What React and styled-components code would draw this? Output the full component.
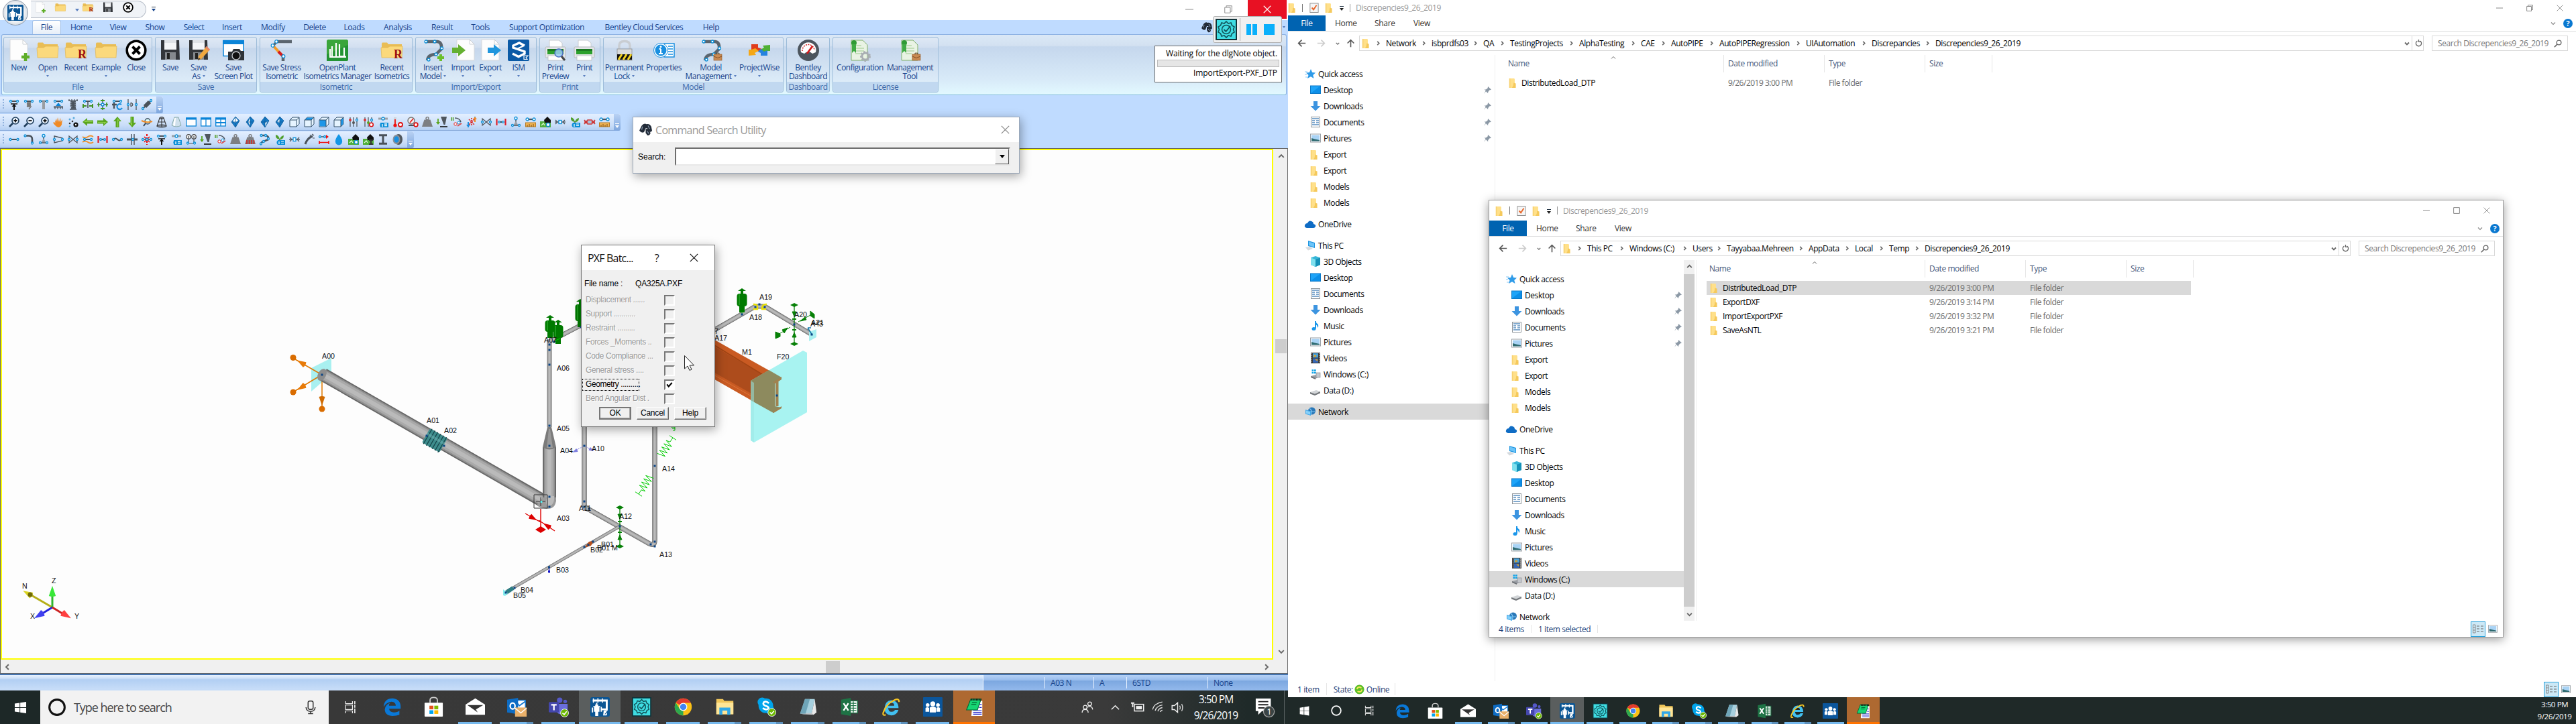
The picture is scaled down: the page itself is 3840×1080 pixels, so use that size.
import React from "react";
import styled, { createGlobalStyle, css } from "styled-components";

const UI = `"Open Sans", "Noto Sans", sans-serif`;
const SANS = `"Liberation Sans", Arial, sans-serif`;

const Global = createGlobalStyle`
  *{box-sizing:border-box}
  html,body{margin:0;padding:0;background:#fff;overflow:hidden}
  body{font-family:${UI};font-size:12px;letter-spacing:-.42px;color:#000;white-space:nowrap}
  svg{display:block;flex:none;overflow:visible}
`;

/* ---------- shared drawing helpers ---------- */
const Svg = ({ s = 16, box = 16, w, h, children }) => (
  <svg width={w || s} height={h || s} viewBox={`0 0 ${box} ${box}`} preserveAspectRatio="none">{children}</svg>
);
const L = ({ d, c = "#4a525a", w = 1.5, f = "none", ...r }) => <path d={d} stroke={c} strokeWidth={w} fill={f} {...r} />;
const F = ({ d, c }) => <path d={d} fill={c} />;
const N = ({ x, y, r = 1.5 }) => <circle cx={x} cy={y} r={r} fill="#fff" stroke="#0a8fd8" strokeWidth="1.3" />;

/* ---------- 16px toolbar glyphs ---------- */
const Bar = () => <><L d="M2 3H14" w={2} /><N x={3} y={3} /><N x={13} y={3} /></>;
const Lens = ({ k }) => (
  <>
    <L d="M1 15L6 10" c="#1d3c5a" w={2.6} />
    <circle cx="10" cy="6" r="5" fill="#eaf4ff" stroke="#1d3c5a" strokeWidth="1.6" />
    <L d={k === "-" ? "M7.5 6H12.5" : "M7.5 6H12.5M10 3.5V8.5"} c="#111" w={1.8} />
  </>
);
const Info = () => (
  <><L d="M1 3H15" c="#9aa0a6" w={3} /><N x={8} y={3} r={2} /><rect x="4" y="9" width="12" height="7" fill="#0a8fd8" /><circle cx="7" cy="12.5" r="3.6" fill="#0a8fd8" /><L d="M7 11V15M10 11H14M10 13.5H14" c="#fff" w={1.3} /></>
);
const Valve = () => <><L d="M2 3V13L14 3V13Z" w={1.2} /><N x={2} y={8} /><N x={14} y={8} /></>;
const Arrow = ({ r }) => <g transform={`rotate(${r} 8 8)`}><F d="M0 8L7 2V5.5H16V10.5H7V14Z" c="#5aa51e" /><F d="M2 8L6 5V7H15V8Z" c="#8fd04a" /></g>;
const Cube = ({ k }) => (
  <>
    <path d="M1 5L5 1H15V11L11 15H1Z" fill="#e6f4ff" stroke="#33506b" strokeWidth="1" />
    {k === 1 && <F d="M1.5 5L5 1.5H14.5L11 5Z" c="#1c96e8" />}
    {k === 2 && <F d="M1.5 5H11V14.5H1.5Z" c="#1c96e8" />}
    {k === 3 && <F d="M11 5L14.5 1.5V11L11 14.5Z" c="#1c96e8" />}
    <L d="M1 5H11V15M11 5L15 1" c="#33506b" w={1} />
  </>
);
const Gem = ({ k }) => (
  <>
    <F d="M8 0L14 6L8 16L2 8Z" c="#1679c4" />
    <F d={["M8 1L12 6L8 9L4 7Z", "M8 1L5 8L8 14Z", "M8 9L12 7L8 15Z", "M4 8L8 3L8 9Z"][k]} c="#fff" />
    <L d="M8 0L14 6L8 16L2 8ZM8 0V16M2 8H13" c="#0b5a9c" w={0.8} />
  </>
);
const Win = ({ k }) => (
  <><rect x="0.7" y="2" width="14.6" height="12" fill="#fff" stroke="#0a84d8" strokeWidth="1.3" /><rect x="0" y="1.5" width="16" height="3" fill="#0a84d8" />{k > 0 && <L d="M8 3V14" c="#0a84d8" w={1.3} />}{k > 1 && <L d="M0 9H16" c="#0a84d8" w={2} />}</>
);
const Sliders = ({ p }) => <><L d="M3 1V15M8 1V15M13 1V15" w={1.2} /><circle cx="3" cy="5" r="2" fill="#d33" /><circle cx="8" cy="9" r="2" fill={p ? "#5aa51e" : "#555"} /><N x={13} y={5} />{p && <circle cx="12.5" cy="12" r="2.8" fill="#fff" stroke="#d11" strokeWidth="1.6" />}</>;
const Weight = ({ r }) => <><circle cx="8" cy="2.6" r="2" fill="none" stroke="#777" strokeWidth="1.4" /><F d="M3.5 4.5H12.5L16 15H0Z" c="#7d7f82" />{r && <L d="M3 9V15M6.5 9V15M10 9V15M13.5 9V15" c="#d22" w={1.5} />}</>;
const Dial = () => <><L d="M0 6V1M2.5 1V6" c="#4a9a1c" w={1.4} /><L d="M5 2Q12 2 14 8" w={1.6} /><circle cx="6" cy="11" r="2.2" fill="#fff" stroke="#d22" /><circle cx="11" cy="9" r="2" fill="#fff" stroke="#0a8fd8" /><L d="M9 14L15 10" c="#d55" w={2} /></>;
const Funnel = () => <><F d="M6 0H15L12.5 12H10.5Z" c="#50575e" /><L d="M5 15H16" c="#111" w={1.6} /><L d="M2 3V11" c="#5aa51e" w={1.8} /><F d="M-1 8H5L2 12Z" c="#5aa51e" /></>;
const Tee = () => <><L d="M8 2V11M2 13H14" w={1.6} /><N x={8} y={2.5} r={2} /><N x={3} y={13} /><N x={13} y={13} /><F d="M8 6L11 12H5Z" c="#9aa0a6" /></>;
const Ruler = () => <><L d="M2 4H14" w={2.2} /><N x={3} y={4} r={2} /><N x={13} y={4} r={2} /><rect x="0.5" y="9" width="15" height="6" fill="#f0b455" stroke="#b77a20" /><L d="M3 12V15M6 11V15M9 12V15M12 11V15" c="#7a4c10" w={1} /></>;
const House = ({ k }) => <><rect x="0" y="7" width="16" height="9" fill="#4fae3b" /><F d="M6 5L11 0L16 5V9H7Z" c="#111" /><L d="M2 13L5 10L7 13" c="#e8ffe0" w={1.2} />{k ? <L d="M9 9H15M12 9V15M9 15H15" c="#333" w={2} /> : <N x={12} y={12} r={2.6} />}</>;
const RedPipe = () => <><L d="M4 8H12" w={2.2} /><N x={5} y={8} r={1.4} /><N x={11} y={8} r={1.4} /><L d="M1.5 3V13M14.5 3V13" c="#e0202a" w={2.2} /></>;
const Plant = () => <><F d="M8 8Q1 7 2 1Q7 2 8 8Q9 3 14 2Q14 8 8 8" c="#4f9f2c" /><L d="M8 7V10" c="#4a7a20" /><rect x="5" y="9" width="11" height="7" fill="#0a8fd8" /><circle cx="7" cy="12.5" r="3.5" fill="#0a8fd8" /><L d="M7 11V15M10 11H14M10 13.5H14" c="#fff" w={1.2} /></>;
const Conn = () => <><L d="M0 8H16" w={1.3} /><L d="M1 5L4 8L1 11M15 5L12 8L15 11" w={1.2} /><rect x="6" y="5.5" width="4" height="5" fill="#fff" stroke="#0a8fd8" strokeWidth="1.3" /></>;
const Frustum = ({ wire }) => wire
  ? <><L d="M5 2H11L15 14H1ZM8 2V15M3 8H13" c="#333" w={1.1} /><ellipse cx="8" cy="2" rx="3" ry="1.5" fill="none" stroke="#333" /><ellipse cx="8" cy="14" rx="7" ry="2" fill="none" stroke="#333" /></>
  : <><path d="M5 1H11L15 13Q8 17 1 13Z" fill="#cfe0ec" stroke="#8aa" /><F d="M5 2H7L6 14L3 13Z" c="#fff" /></>;

const G = {
  hold: <><Bar /><L d="M3 7H13" c="#111" w={1.5} /><L d="M8 8V16" c="#111" w={2} /><F d="M4.5 11L8 7L11.5 11Z" c="#111" /></>,
  spring: <><Bar /><L d="M5 5H11L5 7H11L5 9H11L5 11H11L8 15" c="#777" w={1.5} /></>,
  rod: <><Bar /><L d="M8 3V15" c="#9a9ea2" w={4} /></>,
  ground: <><Bar /><F d="M8 5L12 10H4Z" c="#0a84d8" /><L d="M1 11.5H15" w={2} /><L d="M3 12V15M7 12V15M11 12V15M14 12V15" w={1.2} /></>,
  coil: <><L d="M1 1.5H15M2 0V3M6 0V3M10 0V3M14 0V3" w={1.2} /><L d="M4 4H12L4 7H12L4 10H12L5 13H12" w={1.8} /><L d="M3 15H13" w={1.6} /></>,
  guide: <><Bar /><L d="M8 4V13" w={1.6} /><L d="M0 10H6M10 10H16M1 7V13M15 7V13" c="#3f8f1e" w={1.8} /></>,
  cross: <><L d="M0 8H16M8 0V16" w={1.4} /><N x={8} y={8} r={2} /><L d="M2 5V11M14 5V11M5 2H11M5 14H11" c="#3f9f1e" w={1.8} /></>,
  rotate: <><Bar /><L d="M3 5V14M0 8H7" w={2.4} /><path d="M14 8A4 4 0 1 0 15 13" fill="none" stroke="#1a8fe0" strokeWidth="2.2" /></>,
  dBox: <><L d="M2 0V16M14 0V16" w={1.3} /><N x={2} y={8} /><N x={14} y={8} /><L d="M6 5V11M6 5Q12 8 6 11" c="#444" w={1.1} /></>,
  damper: <><L d="M2 14L14 2" w={2} /><L d="M5 11L12 4" w={6} /><N x={2} y={14} /><N x={14} y={2} /></>,
  zin: <Lens k="+" />, zout: <Lens k="-" />,
  hand: <><F d="M3 8L5 3L6 8L7 1L9 8L11 1.5L11.5 8L14 4L13 12Q11 16 8 16Q4 15 0 9Q2 7 4 10Z" c="#f08a24" /></>,
  dots: <><circle cx="3" cy="4" r="1.5" fill="#59a9dd" /><circle cx="9" cy="2" r="1.5" fill="#59a9dd" /><circle cx="3" cy="10" r="1.3" fill="#333" /><circle cx="7" cy="7" r="1.3" fill="#333" /><circle cx="3" cy="14.5" r="1.2" fill="#59a9dd" /><circle cx="12" cy="12" r="3.6" fill="#111" /><circle cx="12" cy="12" r="1.2" fill="#fff" /></>,
  al: <Arrow r={0} />, ar: <Arrow r={180} />, au: <Arrow r={90} />, ad: <Arrow r={270} />,
  orbit: <><L d="M3 14L6 10" c="#345" w={2} /><circle cx="9" cy="7" r="4" fill="#dff" stroke="#345" strokeWidth="1.3" /><L d="M0 6Q8 10 16 7" c="#f08a24" w={2} /></>,
  wire: <Frustum wire />, solid: <Frustum />,
  w0: <Win k={0} />, w1: <Win k={1} />, w2: <Win k={2} />,
  g0: <Gem k={0} />, g1: <Gem k={1} />, g2: <Gem k={2} />, g3: <Gem k={3} />,
  c0: <Cube k={0} />, c1: <Cube k={1} />, c2: <Cube k={2} />, c3: <Cube k={3} />,
  sl: <Sliders />, slp: <Sliders p />, info: <Info />,
  temp: <><L d="M4 1V11" c="#cfd6dc" w={4} /><L d="M4 4V12" c="#e11" w={1.8} /><circle cx="4" cy="13" r="2.6" fill="#e11" /><circle cx="12" cy="12" r="3" fill="#fff" stroke="#d11" strokeWidth="1.8" /></>,
  gauge: <><circle cx="6" cy="6" r="5" fill="#eee" stroke="#777" strokeWidth="1.4" /><L d="M4 9L9 3" c="#e11" /><L d="M2 13H10" w={2} /><circle cx="13" cy="12" r="2.8" fill="#fff" stroke="#d11" strokeWidth="1.8" /></>,
  weight: <Weight />, weightR: <Weight r />, funnel: <Funnel />, dial: <Dial />,
  thermal: <><L d="M3 16V8M13 0V8" c="#1a8fe0" w={2} /><F d="M0 12H6L3 16Z" c="#1a8fe0" /><L d="M13 3V8" c="#f08a24" w={2} /><F d="M10 4H16L13 0Z" c="#f08a24" /><L d="M4 4L12 12M12 4L4 12M8 2V14" c="#d22" w={1.6} strokeDasharray="2 1" /></>,
  valve: <Valve />, red: <RedPipe />, tee: <Tee />, ruler: <Ruler />, house: <House />, house2: <House k={1} />, conn: <Conn />, plant: <Plant />,
  clash: <><L d="M0 5L5 11H11L16 5M0 11L5 5H11L16 11M0 8H16" c="#c33" w={1.6} /><rect x="5.5" y="6" width="5" height="4" fill="#a9c6e0" /></>,
  run: <><L d="M3 8H13" w={2} /><N x={2.5} y={8} /><N x={13.5} y={8} /></>,
  bend: <><L d="M2 2.5H8Q13 2.5 13 8V13" w={2.6} /><N x={2.5} y={2.5} /><N x={13} y={13.5} /></>,
  reducer: <><L d="M2 3L14 6V10L2 13Z" w={1.3} /><N x={2} y={8} /><N x={14} y={8} /></>,
  hot: <><L d="M0 4Q4 7 8 4T16 4M0 12Q4 9 8 12T16 12" c="#f0902a" w={1.8} /><L d="M2 8H14" w={2} /><N x={3} y={8} /><N x={13} y={8} /></>,
  flex: <><L d="M2 8Q5 5 8 8T14 8" w={1.8} /><N x={2} y={8} /><N x={14} y={8} /></>,
  crossing: <><L d="M7 0V16M11 0V16" w={1.4} /><L d="M0 8H16" w={3} /><N x={9} y={8} /></>,
  star: <><L d="M8 0V16" c="#e11" w={2} strokeDasharray="3 2" /><L d="M0 8H16" w={1.6} /><N x={2} y={8} /><N x={14} y={8} /><L d="M4 4L12 12M12 4L4 12" c="#e11" w={1.6} /><N x={8} y={8} /></>,
  gauges: <><circle cx="4" cy="4" r="3.3" fill="#eee" stroke="#444" strokeWidth="1.2" /><circle cx="12" cy="4" r="3.3" fill="#eee" stroke="#444" strokeWidth="1.2" /><L d="M4 3V12M12 3V12M3 14H13" w={1.2} /><N x={3} y={13.5} /><N x={13} y={13.5} /></>,
  loop: <><L d="M2 2H9Q14 3 13 8L6 11Q2 12 2 15" w={2.6} /><N x={2.5} y={2} /><N x={9} y={2} /><N x={13} y={7} /><N x={6} y={11} /><N x={2} y={14.5} /></>,
  torch: <><L d="M2 15Q5 6 13 3" w={3} /><L d="M12 0L15 2M13 6L16 6M9 1L10 3" w={1.2} /></>,
  measure: <><L d="M3 4H10" w={1.5} /><N x={2} y={4} /><N x={9} y={4} /><F d="M11 1L15 4L11 7Z" c="#e11" /><L d="M1 12.5H15M1 10V15M15 10V15" c="#e11" w={1.6} /></>,
  drop: <><F d="M8 0Q14 8 13 11.5A5 5 0 0 1 3 11.5Q2 8 8 0" c="#1296e6" /></>,
  beam: <><L d="M2 1.8H14M2 14.2H14" w={3} /><L d="M8 2V14" w={3} /></>,
  flange: <><ellipse cx="9" cy="8" rx="6" ry="8" fill="#50575e" /><ellipse cx="6" cy="8" rx="5.5" ry="7" fill="#8a9096" /><ellipse cx="6" cy="8" rx="3.6" ry="4.8" fill="#1a8fe0" /></>,
};

/* ---------- 32px icons ---------- */
const Folder = ({ r }) => (
  <><F d="M1 6L2 4.5H9L11 7H31V27H1Z" c="#e9bd55" /><path d="M0 12H10L13 10H32L31 27H1Z" fill="#fbd97c" stroke="#e3b650" strokeWidth="0.7" />{r && <text x="19" y="28" fontFamily="Liberation Serif" fontSize="18" fontWeight="700" fill="#9a1212" letterSpacing="0">R</text>}</>
);
const Page = ({ c = "#fdfdfd" }) => <><path d="M3 0H22L29 7V31H3Z" fill={c} stroke="#d5d8dc" /><path d="M22 0V7H29Z" fill="#fff" stroke="#c2c6cc" strokeWidth="0.8" /></>;
const Floppy = () => <><F d="M2 1H29L30 30H2Z" c="#33363b" /><F d="M7 1H25V15H7Z" c="#f4f5f7" /><F d="M7 1H25V5H7Z" c="#dfe2e6" /><F d="M8 19H24V30H8Z" c="#85898e" /><F d="M11 20H15V29H11Z" c="#222" /></>;
const PipeS = () => <><L d="M4 3H22Q29 4 28 14L20 22Q8 22 7 31" c="#5b656e" w={4.5} /><N x={5} y={3} r={2} /><N x={18} y={3} r={2} /><N x={28.5} y={13} r={2} /><N x={20} y={22} r={2} /><N x={9} y={30} r={2} /></>;
const Printer = () => <><path d="M7 1H21L26 5V12H7Z" fill="#fff" stroke="#c9ccd0" /><rect x="1" y="11" width="30" height="16" rx="1.5" fill="#e4e6e8" stroke="#b5b8bc" /><rect x="4" y="14" width="24" height="8" fill="#2ca02c" /><rect x="4" y="14" width="24" height="3" fill="#1d7a22" /><rect x="5" y="24" width="22" height="7" fill="#fff" stroke="#b9bcc0" strokeWidth="0.8" /></>;
const Case = ({ x = 19, y = 22 }) => <g transform={`translate(${x} ${y})`}><rect x="0" y="1" width="12" height="9" fill="#c98a52" stroke="#99602e" strokeWidth="0.7" /><L d="M4 1V-0.8H8V1" c="#5a3a1a" w={1} /><L d="M0 4L6 6.5L12 4" c="#7a4a20" w={0.9} /></g>;
const Cert = () => <><path d="M3 1H20L27 8V31H3Z" fill="#e9f3e4" stroke="#7fae6a" /><L d="M9 9H18M9 13H22M9 17H22M9 21H18" c="#9cc98a" w={1.2} /><circle cx="7" cy="5" r="4" fill="#2f9a34" /><F d="M4 7H10V20L7 17L4 20Z" c="#3faa44" /></>;
const PlantLogo = () => (
  <>
    <rect width="32" height="32" rx="3" fill="#0a5594" />
    <L d="M4 5.500H22M22 5.500H27V20H18" c="#fff" w={3.200} /><L d="M5 2V9M12.500 1.500V9M20 2V9" c="#fff" w={1.600} />
    <L d="M10.500 9V15M5 15.500H16" c="#fff" w={2} />
    <F d="M8 12H13V16H15V24H13V31H8V24H6V16H8Z" c="#fff" /><L d="M3.500 17V25M18 16V24" c="#fff" w={2} />
    <F d="M22 22L29 21L25.500 25Q29 27 26.500 30H21Z" c="#fff" /><F d="M24.500 26L26 27.500L23.500 28.500Z" c="#0a5594" />
  </>
);
const CheckGear = () => <><rect x="1" y="1" width="30" height="30" fill="#3fdde3" stroke="#12343a" strokeWidth="2" /><L d="M16 4L19 7L23 6L24.5 10L28 12L26.5 16L28 20L24.500 22L23 26L19 25L16 28L13 25L9 26L7.500 22L4 20L5.500 16L4 12L7.500 10L9 6L13 7Z" c="#12545a" w={1.6} /><circle cx="16" cy="16" r="6.5" fill="none" stroke="#12545a" strokeWidth="1.6" /><L d="M12.500 16L15.500 19L22 11" c="#12545a" w={1.8} /></>;
const CloseRing = () => <><circle cx="16" cy="16" r="13.800" fill="#fff" stroke="#000" strokeWidth="3.600" /><L d="M10.500 10.500L21.500 21.500M21.500 10.500L10.500 21.500" c="#000" w={4} /></>;

const B = {
  new: <><Page /><L d="M26 20V32M20 26H32" c="#5fae28" w={4.5} /></>,
  folder: <Folder />, recent: <Folder r />, close: <CloseRing />, save: <Floppy />,
  saveas: <><Floppy /><F d="M28 10L33 15L20 29L15 31L16 25Z" c="#f0a840" /><F d="M28 10L33 15L31 17L26 12Z" c="#e8836a" /><F d="M15 31L16 27L19 29Z" c="#333" /></>,
  plot: <><rect x="1" y="1.500" width="30" height="23" fill="#fff" stroke="#0a84d8" strokeWidth="1.500" /><rect x="0" y="1" width="32" height="6" fill="#0a84d8" /><F d="M8 18H14L16 14H25L27 17H32V31H8Z" c="#2e3338" /><circle cx="20" cy="24" r="6" fill="#111" stroke="#c8ccd0" strokeWidth="1.300" /></>,
  stress: <><L d="M9 3H31" c="#5b656e" w={4.500} /><L d="M8 4L3 9" c="#5b656e" w={3.500} /><L d="M3 9L14 21" c="#f59a23" w={4} /><L d="M11 18L18 25" c="#d41c1c" w={4} /><L d="M18 25V32" c="#5b656e" w={4.500} /><N x={8} y={3} r={2.300} /><N x={2.500} y={9} r={2.300} /><N x={18.500} y={25} r={2.300} /></>,
  openplant: <><rect width="32" height="32" rx="2.500" fill="#3aa53a" /><F d="M0 32V22L32 8V29Q32 32 29 32Z" c="#249334" /><L d="M5 14V25M8 10V25M14 5V26M19 7V24M26 12V24M4 26H29M18 25H28" c="#fff" w={2.200} /></>,
  insert: <><PipeS /><L d="M27 22V32M22 27H32" c="#6bbf2a" w={4} /></>,
  import: <><g transform="translate(4 0)"><Page /></g><F d="M0 12H9V7L20 16L9 25V20H0Z" c="#64b030" /></>,
  export: <><Page /><F d="M12 12H21V7L32 16L21 25V20H12Z" c="#2196dd" /></>,
  ism: <><rect width="32" height="32" rx="2" fill="#0b5aa6" /><L d="M25 9L17 5L8 9V12L25 18V21L16 25.500L7 21" c="#fff" w={3.400} /><L d="M24 9L14 14" c="#fff" w={2} /><L d="M24 24H30L27 27L29 29.500H24Z" c="#fff" w={1.200} /></>,
  preview: <><Printer /><circle cx="21" cy="20" r="6" fill="#9ccdf5" fillOpacity=".85" stroke="#4b6fc4" strokeWidth="1.500" /><L d="M25 25L30 31" c="#444" w={3} /></>,
  print: <Printer />,
  lock: <><path d="M8 16V9Q8 2.500 16 2.500T24 9V16" fill="none" stroke="#c9cdd2" strokeWidth="3.500" /><rect x="5" y="14" width="22" height="17" fill="#d9dbdd" stroke="#8b8e92" strokeWidth="0.800" /><rect x="5" y="22" width="22" height="8" fill="#111" /><L d="M7 30L12 22M14 30L19 22M21 30L26 22" c="#f2d21e" w={3} /></>,
  props: <><rect x="16" y="6" width="15" height="20" fill="#fff" stroke="#1a8fe0" strokeWidth="1.500" /><L d="M22 10H29M22 14H29M22 18H29M22 22H29" c="#1a8fe0" w={1.300} /><circle cx="11" cy="16" r="10.500" fill="#fff" stroke="#1a8fe0" strokeWidth="1" /><circle cx="11" cy="16" r="8.500" fill="#1a8fe0" /><L d="M11 14V21M8 21H14M8.500 14H11" c="#fff" w={2} /><circle cx="11" cy="10.800" r="1.500" fill="#fff" /></>,
  mgmt: <><PipeS /><Case x={20} y={21} /></>,
  pw: <><F d="M4 7H14V12L20 14L15 18L9 14L4 16Z" c="#e03c1c" /><F d="M32 8V17H28L22 20L16 16L23 12L21 9Z" c="#4eb034" /><F d="M0 24V15H4L10 13L15 17L9 20L11 23Z" c="#f5a716" /><F d="M28 24H18V20L14 18L18 14L23 18L28 16Z" c="#2583e0" /></>,
  dash: <><circle cx="16" cy="16" r="16" fill="#4c555e" /><path d="M5 19A11.500 11.500 0 1 1 27 19L22 21A8 8 0 0 0 10 21Z" fill="#fff" /><path d="M7 17A9 9 0 0 1 25 16" fill="none" stroke="#c22" strokeWidth="1.500" strokeDasharray="2 1.500" /><L d="M14 21L22 10" c="#d11a1a" w={2.800} /></>,
  config: <><Cert /><circle cx="24" cy="25" r="5" fill="none" stroke="#a8adb2" strokeWidth="3" /><circle cx="24" cy="25" r="7" fill="none" stroke="#a8adb2" strokeWidth="2" strokeDasharray="2.500 2.500" /></>,
  license: <><Cert /><Case x={19} y={21} /></>,
};

/* ---------- taskbar icons ---------- */
const K = {
  start: <F d="M3 7L14 5.300V15.300H3ZM15.500 5L29 3V15.300H15.500ZM3 16.700H14V26.700L3 25ZM15.500 16.700H29V29L15.500 27Z" c="#fff" />,
  ring: <circle cx="16" cy="16" r="11" fill="none" stroke="#fff" strokeWidth="2.800" />,
  view: <><L d="M6 3V8H21V3M6 29V24H21V29M6 11H21V21H6Z" c="#e8e8e8" w={1.800} /><L d="M26 3V9M26 11V17M26 19V29" c="#e8e8e8" w={2.400} /></>,
  edge: <path d="M2 16Q3 2 17 2Q30 3 30 16V19H11Q12 25 19 25Q25 25 28 22V29Q23 31 17 31Q4 30 4 20Q5 12 13 9Q10 12 11 14H22Q22 8 15 7.500Q7 8 2 16Z" fill="#0a78d7" />,
  store: <><rect x="1" y="9" width="30" height="23" rx="1" fill="#fff" /><path d="M10 9V5Q10 0.500 16 0.500T22 5V9" fill="none" stroke="#ccc" strokeWidth="2" /><rect x="9" y="14" width="6.500" height="6" fill="#e2521d" /><rect x="17" y="14" width="6.500" height="6" fill="#7fba00" /><rect x="9" y="21.500" width="6.500" height="6" fill="#00a4ef" /><rect x="17" y="21.500" width="6.500" height="6" fill="#ffb900" /></>,
  mail: <><F d="M0 12L16 2L32 12V29H0Z" c="#fff" /><F d="M3 13H29L17 20L20 25Z" c="#333" /></>,
  outlook: <><rect x="13" y="5" width="17" height="17" fill="#fff" stroke="#1277d1" strokeWidth="1.500" /><L d="M14 7L20 14L30 7" c="#1277d1" w={2} /><F d="M0 4L18 1V28L0 25Z" c="#0d6cc4" /><ellipse cx="9" cy="14.500" rx="4" ry="5" fill="none" stroke="#fff" strokeWidth="2.500" /><rect x="13" y="17" width="19" height="15" fill="#e9b06a" /><L d="M13 18L22.500 26L32 18" c="#fff" w={1.600} /></>,
  teams: <><circle cx="18" cy="5" r="4.500" fill="#5559c8" /><circle cx="27" cy="7" r="3" fill="#5559c8" /><F d="M12 11H31V22Q26 30 20 28Q12 27 12 20Z" c="#6a6edb" /><rect x="0" y="8" width="17" height="17" rx="1.500" fill="#4447ad" /><L d="M4 12.500H13M8.500 12.500V21.500" c="#fff" w={2.500} /><circle cx="26" cy="26" r="6.500" fill="#6bb700" stroke="#fff" strokeWidth="1" /><L d="M22.500 26L25.500 28.500L29.500 23.500" c="#fff" w={1.800} /></>,
  pipe: <PlantLogo />, tc: <CheckGear />,
  chrome: <><circle cx="16" cy="16" r="14" fill="#fbc116" /><path d="M16 16L4 9A14 14 0 0 1 28.500 9.500L16 9.500Z" fill="#e33b2e" /><path d="M16 30A14 14 0 0 1 3.800 9L10 19L16 22.500Z" fill="#2da94f" /><circle cx="16" cy="16" r="6.600" fill="#fff" /><circle cx="16" cy="16" r="5.200" fill="#4284f3" /></>,
  files: <><F d="M2 3H13L15 6H30V28H2Z" c="#f0c65a" /><F d="M2 9H30V28H2Z" c="#ffe596" /><F d="M7 17H25V29H20V22H12V29H7Z" c="#31a8e8" /></>,
  skype: <><circle cx="15" cy="14" r="12" fill="#00a5ec" /><circle cx="9" cy="8" r="7.500" fill="#00a5ec" /><circle cx="21" cy="20" r="7.500" fill="#00a5ec" /><L d="M20 10Q16 6 12 8Q9 12 14 14Q21 16 19 19Q15 22 10 18" c="#fff" w={3} /><circle cx="25" cy="25" r="6.500" fill="#6bb700" stroke="#fff" strokeWidth="1" /><L d="M21.500 25L24.500 27.500L28.500 22.500" c="#fff" w={1.800} /></>,
  note: <><F d="M11 3H27L22 27H3Z" c="#a7d0de" /><F d="M27 3L30 25L25 29L22 27Z" c="#e9e9e9" /><F d="M3 27L22 26L25 29L8 28Z" c="#bfc4c8" /><F d="M11 3H19L12 27H3Z" c="#6fa5b8" /></>,
  excel: <><rect x="15" y="6" width="14" height="20" fill="#fff" stroke="#1e7345" strokeWidth="1.500" /><L d="M18 10H27M18 14H27M18 18H27M18 22H27M22 7V25" c="#1e7345" w={1.500} /><F d="M2 4L18 1V31L2 28Z" c="#1e7345" /><L d="M6 10L14 22M14 10L6 22" c="#fff" w={2.600} /></>,
  ie: <><path d="M16 5Q28 6 28 18H11Q12 25 17 24Q21 24 22 21H28Q25 30 16 30Q5 29 5 18Q6 6 16 5ZM11 14H21Q21 9 16 9.500Q11.500 10 11 14Z" fill="#42c0f0" /><path d="M29 8Q29 1 21 5Q8 11 3 25Q1 31 7 29" fill="none" stroke="#f5c423" strokeWidth="2.500" /></>,
  team: <><rect width="32" height="32" rx="1" fill="#0b569c" /><circle cx="16" cy="11" r="4" fill="#fff" /><circle cx="7.500" cy="13" r="3" fill="#fff" /><circle cx="24.500" cy="13" r="3" fill="#fff" /><F d="M11 25V17Q16 14 21 17V25ZM4 24V18Q7 15 10 18V24ZM22 24V18Q25 15 28 18V24Z" c="#fff" /></>,
  green: <><F d="M13 6H29V31H11Z" c="#fff" /><L d="M14 22H28M14 25H28M14 28H28M24 12H28M24 17H28" c="#22c" w={1.200} /><path d="M10 3H27L21 21H3Z" fill="#16d573" stroke="#063" strokeWidth="1.200" /><L d="M11 4H28" c="#111" w={3} strokeDasharray="1.500 1" /><L d="M12 9H20M11 12H19" c="#063" w={1.300} /></>,
};

/* ---------- explorer icons ---------- */
const FolderMini = () => <Svg s={14} w={13} h={15}><F d="M1 1H10L11 2V16H1Z" c="#ffe08a" /><F d="M9 8L13 9V16H6Q9 13 9 8" c="#f5c95c" /><F d="M1 1H3V16H1Z" c="#f7d272" /></Svg>;
const T = {
  star: <><F d="M9 1L11.200 6L16 6.500L12.300 10L13.500 15L9 12.300L4 15L5.500 10L2 6.500L7 6Z" c="#2f9be8" /><L d="M0 5H4M0 9H3M1 13H4" c="#8ac8f5" w={1} /></>,
  desk: <><rect x="0.500" y="2" width="15" height="11.500" fill="#1ea4f8" stroke="#0c79c8" /><F d="M1 13L14 3H15V13Z" c="#0d8fe8" /></>,
  down: <F d="M5 1H11V8H15.500L8 15.500L0.500 8H5Z" c="#3c94e0" />,
  doc: <><rect x="1.500" y="0.500" width="13" height="15" fill="#fff" stroke="#8a9298" /><L d="M3 3H13M3 6H7M9 6H13M3 9H7M9 9H13M3 12H13" c="#5a8fc0" w={1.300} /></>,
  pic: <><rect x="0.500" y="2" width="15" height="12" fill="#fff" stroke="#9aa0a6" /><rect x="2" y="3.500" width="12" height="9" fill="#a9d3f5" /><F d="M2 12.500V8L7 9.500L14 11V12.500Z" c="#2e6a70" /></>,
  cloud: <F d="M3 14Q-1 13 0 10Q1 7 4 7Q6 2 10 4Q13 5 13 8Q17 9 16 12Q15 14 13 14Z" c="#0f6cc4" />,
  pc: <><F d="M5 1L15 4V12L5 9Z" c="#2196e0" /><F d="M6 2.500L14 5V10.500L6 8Z" c="#6cc4f8" /><F d="M1 11L7 10L12 13L5 15.500Z" c="#d5d9dd" /></>,
  cube: <><F d="M8 0L15 2.500V13L8 16L1 13V2.500Z" c="#35b6d8" /><F d="M1 2.500L8 5V16L1 13Z" c="#7fe0ee" /><F d="M8 5L15 2.500V13L8 16Z" c="#1591b8" /></>,
  music: <><L d="M8 1V12" c="#1a96ea" w={2} /><ellipse cx="5.500" cy="12.500" rx="3" ry="2.500" fill="#1a96ea" /><F d="M8 1Q9 4 12 6Q13 9 11 11Q11 7 8 6Z" c="#1a96ea" /></>,
  video: <><rect x="1" y="0" width="14" height="16" fill="#333" /><rect x="4" y="1" width="8" height="6.500" fill="#4aa0d8" /><rect x="4" y="8.500" width="8" height="6.500" fill="#3668b8" /><F d="M6 3L10 5L5 7ZM7 10H11V13Z" c="#e0a020" /><L d="M2.500 1V16M13.500 1V16" c="#ddd" w={1.200} strokeDasharray="1.500 1.500" /></>,
  c: <><L d="M2.500 2.500H9M2.500 6H9" c="#12a4e8" w={2.600} strokeDasharray="2.800 0.700" /><F d="M1 11L9 9L15 11L8 15Z" c="#9a9ea4" /><F d="M1 11V13L8 16V14Z" c="#6b6f74" /><rect x="9" y="6" width="6" height="7" fill="#c3c7cc" stroke="#8a8e94" strokeWidth=".7" /></>,
  d: <><F d="M0 11L9 8L15 10L7 13.500Z" c="#d2d5d8" /><F d="M0 11L7 13.500L15 10V12.500L7 16L0 13.500Z" c="#74787c" /></>,
  net: <><circle cx="10.500" cy="7" r="5.500" fill="#2a78b8" /><L d="M7 3Q12 7 9 12M6 8H15" c="#7fc3f0" w={1.200} /><F d="M1 5L9 7.500V14L1 11.500Z" c="#3fa8ea" /><F d="M2 6.500L8 8.300V12.500L2 10.700Z" c="#86d0fa" /></>,
};
const Pin = () => <Svg s={11}><F d="M9 0L16 7L12 8L9 12V15L4.500 10.500L0 16L4 9L1 6.500H4.500L8 4Z" c="#8b98a5" /></Svg>;

/* ---------- layout ---------- */
const Desktop = styled.div`display:flex;width:3840px;height:1080px;position:relative;overflow:hidden;`;
const Screen = styled.div`width:1920px;height:1080px;display:flex;flex-direction:column;position:relative;flex:none;`;

/* CAD application */
const AppTitle = styled.div`height:30px;background:#fff;display:flex;flex:none;padding-left:4px;z-index:2;`;
const Orb = styled.div`width:38px;height:38px;border-radius:50%;background:radial-gradient(#fff 40%,#b9c3cf);border:1px solid #8d99a8;display:flex;align-items:center;justify-content:center;flex:none;`;
const QuickBar = styled.div`height:26px;margin:1px 0 0 4px;width:172px;border:1px solid #b4bbc6;border-left:0;border-radius:0 13px 13px 0;background:#f0f3f7;display:flex;align-items:flex-start;padding:1px 18px 0 6px;justify-content:space-between;`;
const Caret = styled.i`width:0;height:0;border:${p => p.$s || 3}px solid transparent;border-top:${p => (p.$s || 3) + 1}px solid ${p => p.$c || "#5a7fc0"};border-bottom:0;display:inline-block;flex:none;`;
const CaretCell = styled.div`margin:${p => p.$m || 0};display:flex;flex-direction:column;align-items:center;gap:2px;${p => p.$line && css`&:before{content:"";width:6px;border-top:1px solid ${p.$lc || "#234"};}`}`;
const WinButtons = styled.div`margin-left:auto;display:flex;height:28px;`;
const WinBtn = styled.div`width:${p => p.$w || 58}px;height:${p => p.$h || 28}px;display:flex;align-items:center;justify-content:center;${p => p.$red && "background:#e81123;"}`;
const Tabs = styled.div`height:21px;background:#bfdbff;display:flex;align-items:stretch;flex:none;padding-left:48px;color:#15428b;position:relative;`;
const Tab = styled.div`width:${p => p.$w}px;height:21px;line-height:22px;text-align:center;${p => p.$on && css`background:linear-gradient(#fff,#e6eef8);border:1px solid #a5c3ea;border-bottom:0;border-radius:3px 3px 0 0;line-height:20px;`}`;
const RibbonBack = styled.div`background:#bfdbff;flex:none;padding:0 2px;`;
const Ribbon = styled.div`height:91px;border:1px solid #8db2e3;border-bottom-color:#7fb8d8;border-radius:3px;background:linear-gradient(#dbe8f6 0,#d3e1f1 18%,#c5d7ed 20%,#d8eaf8 75%,#e2f9ff);padding:3px 0 3px 2px;display:flex;gap:4px;`;
const Group = styled.div`width:${p => p.$w}px;border:1px solid #9dbcd9;border-radius:3px;display:flex;flex-direction:column;background:linear-gradient(#dfe9f5 0,#d2dff0 18%,#c6d7ec 20%,#dcebf8 80%);overflow:hidden;`;
const GroupBody = styled.div`flex:1;display:flex;padding-left:${p => p.$pl}px;`;
const GroupName = styled.div`height:15px;line-height:15px;background:#c1d8f0;text-align:center;color:#3e6aaa;`;
const Tool = styled.div`width:${p => p.$w}px;flex:none;display:flex;flex-direction:column;align-items:center;padding-top:3px;color:#15428b;line-height:13px;text-align:center;font-size:12px;letter-spacing:-.52px;`;
const ToolText = styled.div`margin-top:3px;display:flex;flex-direction:column;align-items:center;`;
const ToolLine = styled.div`height:13px;display:flex;align-items:center;gap:3px;white-space:nowrap;`;
const ToolArea = styled.div`height:80px;background:#bfdbff;flex:none;display:flex;flex-direction:column;padding-top:2px;gap:1px;align-items:flex-start;border-bottom:1px solid #666;`;
const Strip = styled.div`height:25px;display:flex;align-items:center;background:linear-gradient(#e3efff,#c9ddf8 70%,#b4cff2);border-bottom:1px solid #86a9d8;border-radius:0 3px 3px 0;padding-left:4px;`;
const Grip = styled.div`width:2px;height:16px;background:repeating-linear-gradient(#8fb0dc 0 2px,transparent 2px 4px);margin-right:4px;`;
const Cell = styled.div`width:22px;display:flex;justify-content:center;flex:none;`;
const StripEnd = styled.div`width:10px;height:25px;margin-left:${p => p.$m || 0}px;background:linear-gradient(#b9d2f4,#7ea6dd);border-radius:0 4px 4px 0;display:flex;align-items:flex-end;justify-content:center;padding-bottom:4px;`;
const Work = styled.div`height:763px;flex:none;display:grid;grid-template-columns:1899px 19px;grid-template-rows:762px;border-left:1px solid #666;border-right:1px solid #666;background:#f0f0f0;`;
const View = styled.div`border:2px solid #ff0;background:#fdfdfd;width:1897px;height:762px;overflow:hidden;`;
const VBar = styled.div`display:flex;flex-direction:column;align-items:center;padding-top:6px;`;
const VThumb = styled.div`width:17px;height:21px;background:#cdcdcd;margin:${p => p.$m};`;
const HBar = styled.div`height:20px;flex:none;background:#f0f0f0;border:1px solid #666;border-top:0;display:flex;align-items:center;padding:0 26px 0 5px;`;
const HThumb = styled.div`width:21px;height:18px;background:#cdcdcd;margin:0 auto 0 1215px;`;
const Status = styled.div`height:25px;flex:none;display:flex;border-top:2px solid #4574b0;background:linear-gradient(#e8f2ff,#cfe1f8 20%,#b2cff3 30%,#c6dcf8 90%);color:#15428b;`;
const StatusDark = styled.div`margin-left:1465px;flex:1;display:flex;border-left:1px solid #fff;padding-left:91px;background:linear-gradient(#b5d0f5,#9cbfee 30%,#7da8e0 40%,#93b9ec);`;
const StatusCell = styled.div`width:${p => p.$w}px;border-left:1px solid #e8f2ff;padding-left:8px;line-height:17px;height:17px;margin-top:3px;`;

/* overlays floating on the desktop */
const Float = styled.div`position:absolute;left:${p => p.$x}px;top:${p => p.$y}px;width:${p => p.$w}px;height:${p => p.$h}px;z-index:5;display:flex;`;
const Recorder = styled(Float)`background:#f0f0f0;border:1px solid #b0b0b0;border-radius:3px;align-items:center;padding-left:3px;`;
const Divider = styled.div`width:1px;height:${p => p.$h}px;background:${p => p.$c || "#aaa"};margin:${p => p.$m || "0"};flex:none;`;
const Block = styled.div`width:${p => p.$w}px;height:16px;background:#0bb0fb;margin-left:${p => p.$m}px;`;
const Tip = styled(Float)`background:#fff;border:1px solid #666;flex-direction:column;padding:4px 3px;`;
const TipLine = styled.div`text-align:right;height:16px;line-height:14px;padding-right:${p => p.$r}px;letter-spacing:${p => p.$ls || -0.3}px;`;
const Progress = styled.div`height:11px;border:1px solid #bcbcbc;background:#e6e6e6;margin-bottom:2px;flex:none;`;
const Dialog = styled(Float)`flex-direction:column;background:#f0f0f0;border:1px solid ${p => p.$b};box-shadow:2px 4px 14px rgba(0,0,0,.35);`;
const DlgTitle = styled.div`height:37px;background:#fff;display:flex;align-items:center;padding:0 ${p => p.$pr}px 0 9px;font-size:16px;letter-spacing:${p => p.$ls || -0.8}px;color:${p => p.$c};`;
const Push = styled.div`margin-left:auto;`;
const SearchRow = styled.div`display:flex;align-items:center;padding:8px 0 0 7px;font:12px ${SANS};letter-spacing:0;`;
const Combo = styled.div`margin:0 13px 0 auto;width:500px;height:27px;background:#fff;border:2px solid;border-color:#6d6d6d #e8e8e8 #e8e8e8 #6d6d6d;display:flex;justify-content:flex-end;`;
const ComboBtn = styled.div`width:21px;background:#f0f0f0;border:1px solid;border-color:#fff #555 #555 #fff;display:flex;align-items:center;justify-content:center;`;
const FileLine = styled.div`height:34px;padding:13px 0 0 4px;font:12px ${SANS};letter-spacing:-.2px;display:flex;`;
const FileKey = styled.span`width:76px;`;
const Opt = styled.div`height:21.100px;display:flex;align-items:center;font:12px ${SANS};letter-spacing:-.42px;color:${p => p.$on ? "#000" : "#9a9a9a"};text-shadow:${p => p.$on ? "none" : "1px 1px 0 #fff"};padding-left:2px;`;
const OptText = styled.div`width:${p => p.$on ? 83 : 121}px;padding-left:4px;height:16px;line-height:15px;margin-right:${p => p.$on ? 38 : 0}px;outline:${p => p.$on ? "1px dotted #000" : "0"};`;
const Check = styled.div`width:16px;height:16px;border:2px solid;border-color:#777 #fff #fff #777;background:${p => p.$on ? "#fff" : "#f0f0f0"};display:flex;align-items:center;justify-content:center;`;
const BtnRow = styled.div`display:flex;gap:8px;padding:1px 0 0 26px;`;
const Btn = styled.div`width:48px;height:19px;font:12px ${SANS};letter-spacing:-.2px;line-height:15px;text-align:center;border:${p => p.$def ? 2 : 1}px solid;border-color:${p => p.$def ? "#777" : "#fff #666 #666 #fff"};background:#f0f0f0;box-shadow:inset -1px -1px 0 #aaa;padding-top:${p => p.$def ? 0 : 1}px;`;

/* taskbar */
const Taskbar = styled.div`height:${p => p.$h}px;flex:none;display:flex;background:${p => p.$bg};color:#fff;`;
const TaskCell = styled.div`width:${p => p.$w}px;flex:none;display:flex;flex-direction:column;align-items:center;justify-content:space-between;padding-top:${p => p.$pt}px;background:${p => p.$bg || "none"};`;
const Under = styled.div`height:3px;width:${p => p.$w}px;background:${p => p.$c};border-right:${p => p.$split ? "10px solid #5d90bb" : "0"};`;
const SearchBox = styled.div`width:430px;background:#f2f2f2;display:flex;align-items:center;padding:0 17px 0 11px;color:#444;font-size:18px;letter-spacing:-1.050px;`;
const SearchText = styled.div`margin:0 auto 0 11px;`;
const Tray = styled.div`margin-left:auto;display:flex;align-items:center;`;
const TrayCell = styled.div`width:${p => p.$w}px;display:flex;justify-content:center;`;
const Clock = styled.div`width:${p => p.$w}px;text-align:center;font-size:${p => p.$f}px;line-height:${p => p.$lh}px;letter-spacing:${p => p.$ls}px;`;

/* explorer */
const Exp = styled.div`display:flex;flex-direction:column;background:#fff;flex:none;height:${p => p.$h}px;width:${p => p.$w}px;overflow:hidden;`;
const ExpFloat = styled.div`position:absolute;left:299px;top:298px;border:1px solid #999;box-shadow:0 3px 14px rgba(0,0,0,.4);z-index:3;`;
const ETitle = styled.div`height:${p => p.$h}px;display:flex;align-items:center;padding-left:${p => p.$x}px;color:#999;flex:none;`;
const ECtl = styled.div`margin-left:auto;display:flex;margin-right:2px;`;
const ETabs = styled.div`height:24px;display:flex;border-bottom:1px solid #dadbdc;align-items:center;color:#333;flex:none;padding-right:5px;`;
const EFile = styled.div`width:56px;height:23px;background:#0063b1;color:#fff;text-align:center;line-height:23px;margin-right:14px;`;
const ETab = styled.div`width:${p => p.$w}px;letter-spacing:-.3px;`;
const ENav = styled.div`height:35px;flex:none;display:flex;align-items:center;padding:0 12px 0 12px;`;
const NavIcon = styled.div`width:${p => p.$w}px;display:flex;justify-content:center;flex:none;margin-right:${p => p.$mr || 0}px;`;
const Address = styled.div`flex:1;height:23px;border:1px solid #d9d9d9;display:flex;align-items:center;padding-left:3px;`;
const Chev = styled.div`width:${p => p.$w || 24}px;display:flex;justify-content:center;flex:none;`;
const Crumb = styled.div`width:${p => p.$w}px;flex:none;letter-spacing:-.42px;`;
const ESearch = styled.div`width:203px;height:23px;border:1px solid #d9d9d9;margin-left:12px;display:flex;align-items:center;justify-content:space-between;padding:0 8px;color:#767676;`;
const EMain = styled.div`flex:1;min-height:0;display:flex;overflow:hidden;`;
const Tree = styled.div`width:${p => p.$w}px;flex:none;padding-top:16px;overflow:hidden;`;
const TreeRow = styled.div`height:24px;display:flex;align-items:center;padding-left:${p => p.$lvl ? 33 : 25}px;margin-top:${p => p.$gap ? 8 : 0}px;background:${p => p.$sel ? "#d9d9d9" : "none"};`;
const TreeText = styled.div`margin-left:4px;flex:1;`;
const PinCell = styled.div`margin-right:${p => p.$m}px;`;
const EScroll = styled.div`width:16px;background:#f0f0f0;display:flex;flex-direction:column;align-items:center;justify-content:space-between;padding:5px 0;`;
const EThumb = styled.div`width:16px;height:496px;background:#cdcdcd;`;
const List = styled.div`flex:1;border-left:1px solid #efefef;margin-left:${p => p.$ml}px;padding-left:15px;`;
const Head = styled.div`height:26px;display:flex;color:#44577a;line-height:25px;`;
const HeadCell = styled.div`width:${p => p.$w}px;border-right:1px solid #e5e5e5;padding-left:${p => p.$pl || 6}px;position:relative;`;
const Sort = styled.div`position:absolute;left:157px;top:0;`;
const Row = styled.div`height:21px;width:722px;display:flex;align-items:center;background:${p => p.$sel ? "#d9d9d9" : "none"};padding-left:5px;`;
const RowName = styled.div`width:${p => p.$w}px;padding-left:6px;`;
const Dim = styled.div`width:150px;color:#6d6d6d;letter-spacing:-.5px;`;
const Rows = styled.div`padding-top:5px;`;
const EStatus = styled.div`height:24px;flex:none;display:flex;align-items:center;padding-left:14px;color:#1f3f77;`;
const ViewBtns = styled.div`margin-left:auto;display:flex;align-items:center;gap:4px;padding-right:8px;`;
const ViewOn = styled.div`width:22px;height:23px;border:1px solid #26a0da;background:#cce8f6;display:flex;align-items:center;justify-content:center;`;

const Chevron = ({ dir = "r", c = "#666", s = 7, w = 1.6 }) => {
  const d = { r: "M5 2L11 8L5 14", l: "M11 2L5 8L11 14", u: "M2 11L8 5L14 11", d: "M2 5L8 11L14 5" }[dir];
  return <Svg s={s}><L d={d} c={c} w={(w * 16) / s} /></Svg>;
};
const XMark = ({ c = "#888", s = 12 }) => <Svg s={s}><L d="M1 1L15 15M15 1L1 15" c={c} w={1.5} /></Svg>;
const Binoc = ({ s = 18 }) => (
  <Svg s={s}>
    <F d="M0 9L3 3Q6 -1 9 1Q13 0 15 4L16 9Q15 12 12 10L10 6L8 6L6 11Q3 13 0 9Z" c="#222b38" />
    <F d="M8 7L11 7L14 12Q13 16 10 15L8 12Z" c="#222b38" />
    <L d="M4 4L3 8M11 3L13 7M10 10L12 13" c="#8b9bb0" w={1} />
  </Svg>
);

const TABS = [["File", 43], ["Home", 60], ["View", 50], ["Show", 60], ["Select", 56], ["Insert", 58], ["Modify", 64], ["Delete", 60], ["Loads", 58], ["Analysis", 72], ["Result", 60], ["Tools", 54], ["Support Optimization", 144], ["Bentley Cloud Services", 146], ["Help", 54]];
const GROUPS = [
  ["File", 222, 0, [["new", 44, "New"], ["folder", 42, "Open", "^"], ["recent", 42, "Recent"], ["folder", 48, "Example", "^"], ["close", 42, "Close"]]],
  ["Save", 152, 1, [["save", 42, "Save"], ["saveas", 42, "Save", "As ^"], ["plot", 62, "Save", "Screen Plot"]]],
  ["Isometric", 228, 2, [["stress", 60, "Save Stress", "Isometric"], ["openplant", 106, "OpenPlant", "Isometrics Manager"], ["recent", 56, "Recent", "Isometrics"]]],
  ["Import/Export", 181, 3, [["insert", 45, "Insert", "Model ^"], ["import", 44, "Import", "^"], ["export", 38, "Export", "^"], ["ism", 46, "ISM", "^"]]],
  ["Print", 91, 1, [["preview", 44, "Print", "Preview"], ["print", 42, "Print", "^"]]],
  ["Model", 269, 0, [["lock", 61, "Permanent", "Lock ^"], ["props", 57, "Properties"], ["mgmt", 83, "Model", "Management ^"], ["pw", 62, "ProjectWise", "^"]]],
  ["Dashboard", 65, 0, [["dash", 63, "Bentley", "Dashboard"]]],
  ["License", 158, 0, [["config", 80, "Configuration"], ["license", 69, "Management", "Tool"]]],
];
const STRIP1 = "hold spring rod ground coil guide cross rotate dBox damper".split(" ");
const STRIP2 = "zin zout zin hand dots al ar au ad orbit wire solid w0 w1 w2 g0 g1 g2 g3 c0 c1 c2 c3 sl slp info temp gauge weight funnel dial thermal valve red tee ruler house conn plant clash ruler".split(" ");
const STRIP3 = "run bend tee reducer valve hot red flex crossing star hold info gauges funnel dial weight weightR loop plant conn torch measure drop house house2 beam flange".split(" ");

const ToolStrip = ({ items, end }) => (
  <Strip><Grip />{items.map((k, i) => <Cell key={i}><Svg s={16}>{G[k]}</Svg></Cell>)}<StripEnd $m={end}><CaretCell $line $lc="#fff"><Caret $c="#fff" /></CaretCell></StripEnd></Strip>
);

/* ---------- 3D model ---------- */
const Pipe = ({ d, w }) => (
  <g fill="none" strokeLinejoin="round">
    <path d={d} stroke="#666" strokeWidth={w} /><path d={d} stroke="#909090" strokeWidth={w * 0.82} /><path d={d} stroke="#aaa" strokeWidth={w * 0.62} /><path d={d} stroke="#bababa" strokeWidth={w * 0.3} />
  </g>
);
const Node = ({ p }) => p.map(([x, y]) => <rect key={`${x},${y}`} x={x - 1.500} y={y - 1.500} width="3" height="3" fill="#0c4585" />);
const Head3 = ({ x, y, a, c, s = 1 }) => <path transform={`translate(${x} ${y}) rotate(${a}) scale(${s})`} d="M-7 0L6 -4.500Q8 0 6 4.500Z" fill={c} />;
const Hanger = ({ x, y, h = 24 }) => (
  <g fill="#007a00"><path d={`M${x} ${y}L${x + 6} ${y + 4}L${x + 2} ${y + 4}V${y + 8}H${x - 2}V${y + 4}H${x - 6}Z`} /><rect x={x - 7.500} y={y + 8} width="15" height={h - 9} rx="4" /><rect x={x - 4} y={y + h - 2} width="8" height="10" /><rect x={x - 5} y={y + 9} width="2" height={h - 12} fill="#1c9a1c" /></g>
);
const Support = ({ x, y, l = 28 }) => (
  <g fill="#078007" stroke="#078007"><path d={`M${x} ${y - l}V${y + l}`} strokeWidth="1.300" />{[-1, 1].map(k => <g key={k}><path d={`M${x - 6} ${y + k * l}L${x} ${y + k * (l + 3)}L${x + 6} ${y + k * l}L${x} ${y + k * (l - 3)}Z`} strokeWidth="0" /><path d={`M${x - 3} ${y + k * (l - 10)}L${x} ${y + k * (l - 17)}L${x + 3} ${y + k * (l - 10)}Z`} /><path d={`M${x - 3} ${y + k * 8}H${x + 3}`} strokeWidth="2" /></g>)}</g>
);
const Coil = ({ x1, y1, x2, y2 }) => {
  const dx = x2 - x1, dy = y2 - y1, len = Math.hypot(dx, dy), nx = -dy / len, ny = dx / len;
  const pt = (t, o) => `${x1 + dx * t + nx * o} ${y1 + dy * t + ny * o}`;
  let d = `M${pt(0, -6)}L${pt(0, 6)}M${pt(0, 0)}L${pt(0.2, 0)}`;
  for (let i = 0; i < 9; i++) d += `L${pt(0.24 + i * 0.078, i % 2 ? -6 : 6)}`;
  return <path d={d} fill="none" stroke="#0c0" strokeWidth="1" />;
};
const LABELS = [["A00", 480, 531], ["A01", 636, 627], ["A02", 662, 642], ["A03", 830, 773], ["A04", 835, 672], ["A05", 830, 639], ["A06", 830, 549], ["A07", 811, 507], ["A10", 882, 669], ["A11", 863, 758], ["A12", 923, 770], ["A13", 983, 827], ["A14", 987, 699], ["7", 1065, 494], ["A17", 1065, 504], ["A18", 1117, 473], ["A19", 1132, 443], ["A20", 1184, 469], ["A21", 1209, 481], ["A43", 1208, 483], ["M1", 1106, 525], ["F20", 1158, 532], ["B01", 896, 812], ["B01 M", 890, 817], ["B02", 880, 820], ["B03", 829, 850], ["B04", 776, 880], ["B05", 765, 888], ["N", 33, 874], ["Z", 77, 866], ["X", 45, 919], ["Y", 111, 919]];
const LabelText = styled.text`font:10.700px ${SANS};letter-spacing:0;fill:#111;`;

const Model = () => (
  <svg width="1893" height="758" viewBox="3 224 1893 758">
    <path d="M464 549L494 534V558L464 584Z" fill="#a9f0f0" />
    <g stroke="#e07800" strokeWidth="1.500"><path d="M478 558L440 536M478 560L440 583M480 565V606" /></g>
    <Head3 x={449} y={541} a={31} c="#e87a08" /><Head3 x={449} y={578} a={-32} c="#e87a08" /><Head3 x={480} y={598} a={-90} c="#d06a00" />
    <g fill="#d96c00"><circle cx="437" cy="533.500" r="4.500" /><circle cx="437" cy="585" r="4.500" /><circle cx="480" cy="610" r="4.500" /></g>
    <Pipe d="M819 637V510Q820 508 828 505L868 484" w={7} />
    <Pipe d="M482 559L811 748" w={20} />
    <ellipse cx="480" cy="559" rx="6" ry="9.500" transform="rotate(28 480 559)" fill="#8d8d8d" />
    <g transform="translate(648 657) rotate(30)"><rect x="-15" y="-12" width="30" height="24" fill="#3d8c8c" rx="2" />{[-12, -7, -2, 3, 8, 13].map(x => <path key={x} d={`M${x} -13V13`} stroke="#123f44" strokeWidth="1.200" />)}<rect x="-15" y="-5" width="30" height="4" fill="#8cc" opacity=".35" /></g>
    <Pipe d="M819 667V748" w={20} />
    <path d="M809 742H829Q830 759 816 759Q806 758 800 754Z" fill="#9b9b9b" /><path d="M816 740H826Q827 755 816 755Q812 750 816 740" fill="#bbb" />
    <path d="M816 637H822L829 667Q819 674 809 667Z" fill="#7b7b7b" /><path d="M818 640H820L824 668H815Z" fill="#999" />
    <path d="M796 738H816V758H796ZM806 742V755M799 748H813" fill="none" stroke="#333" strokeWidth="1" />
    <circle cx="807" cy="748.500" r="1.500" fill="#5ff" />
    <g stroke="#d00" strokeWidth="1.400"><path d="M806 759V790M783 766L806 779M827 792L803 776" /></g>
    <Head3 x={795} y={773} a={210} c="#d00" s={0.9} /><Head3 x={815} y={784} a={33} c="#d00" s={0.9} />
    <path d="M798 790L806 785L814 790L806 795Z" fill="#d00" />
    <Pipe d="M871 630V753Q872 758 878 760L968 811Q976 815 976 806V630" w={7.500} />
    <Pipe d="M924 785L756 882" w={4.500} />
    <path d="M871 817L878 808L885 807L881 814Z" fill="#b8501c" /><path d="M753 885L765 877" stroke="#2f7f84" strokeWidth="6" /><path d="M750 879L757 885L753 889L750 888Z" fill="#8ee" />
    <path d="M871 665L856 673M871 665L884 672" stroke="#8080e0" strokeDasharray="2 1" /><Head3 x={857} y={673} a={-25} c="#8080e0" s={0.6} /><Head3 x={882} y={671} a={208} c="#8080e0" s={0.6} />
    <path d="M818.500 846V855" stroke="#11a" strokeWidth="1.300" /><rect x="817" y="851" width="3" height="3" fill="#11c" />
    <Coil x1={1003} y1={653} x2={982} y2={684} /><Coil x1={952} y1={737} x2={972} y2={706} /><path d="M1000 637H1006V642H1003M1006 639H1002" fill="none" stroke="#0c0" />
    <Support x={924} y={786} l={29} />
    <Hanger x={820} y={470} h={26} /><Hanger x={832} y={477} h={28} /><Hanger x={865} y={446} h={34} />
    <path d="M825 512Q829 506 835 505" stroke="#0c0" fill="none" />
    <Pipe d="M1060 495L1126 457H1140L1210 499" w={7} />
    <path d="M1123 454Q1130 453 1129 461H1123M1143 454Q1136 453 1136 461H1142" fill="none" stroke="#e8e000" strokeWidth="2.500" />
    <Hanger x={1106} y={430} h={28} /><path d="M1106 465V470" stroke="#0a0" />
    <Support x={1184} y={484} l={29} />
    <g stroke="#078007" fill="#078007"><path d="M1160 499L1178 488M1190 480L1210 469" /><path d="M1156 495L1163 498V502L1156 505ZM1208 464L1214 469V475L1208 471Z" /><path d="M1174 489L1166 492L1169 497ZM1193 479L1200 473L1202 477Z" /></g>
    <path d="M1206 495L1217 491V503L1206 509Z" fill="#a9f0f0" /><path d="M1211 500L1204 489M1204 489H1209" stroke="#17a" strokeWidth="1.500" />
    <path d="M1060 504L1165 563L1160 568V605L1165 608L1153 616L1060 563Z" fill="#c95a22" /><path d="M1060 514L1150 567V604L1060 553Z" fill="#ad4c1c" /><path d="M1060 512L1152 568" stroke="#a04414" strokeWidth="1.500" /><path d="M1060 557L1152 609" stroke="#dc7236" />
    <path d="M1119 568L1197 523L1203 526V615L1124 660L1119 657Z" fill="#a8f3f1" />
    <path d="M1119 568L1146 552L1165 563L1155 570L1155 606L1165 608L1153 616L1119 597Z" fill="#8d8a5e" /><path d="M1156 568H1160.500V606H1156ZM1152 570L1165 562V566L1156 572ZM1152 614L1165 606V609L1153 616Z" fill="#a08250" /><path d="M1119 568L1124 571V660L1119 657Z" fill="#9be6e4" fillOpacity=".5" />
    <Node p={[[480, 559], [636, 650], [662, 665], [819, 741], [819, 756], [819, 665], [819, 635], [819, 544], [819, 522], [819, 514], [826, 510], [866, 488], [871, 665], [871, 748], [871, 756], [878, 759], [924, 785], [970, 812], [976, 808], [976, 815], [976, 695], [818.500, 846], [767, 877], [754, 884], [884, 808], [877, 813], [871, 816], [1106, 469], [1126, 458], [1132, 454], [1140, 458], [1184, 484], [1210, 499], [1158, 590]]} />
    <g strokeWidth="3"><path d="M78 906L40 884" stroke="#b5ae18" /><path d="M78 906V884" stroke="#2fb52f" /><path d="M78 906L60 917" stroke="#22d" /><path d="M78 906L96 917" stroke="#c22" /></g>
    <Head3 x={41} y={885} a={30} c="#d9d322" s={1.1} /><circle cx="45" cy="887" r="3.500" fill="#6e6a0a" /><Head3 x={78} y={882} a={90} c="#38e838" s={1.150} /><Head3 x={58} y={918} a={-32} c="#4040f0" s={1.150} /><Head3 x={99} y={918} a={212} c="#ff4040" s={1.150} />
    {LABELS.map(([t, x, y], i) => <LabelText key={i} x={x} y={y + 4}>{t}</LabelText>)}
  </svg>
);

/* ---------- taskbar ---------- */
const TASKS = [["edge"], ["store"], ["mail", 1], ["outlook", 2], ["teams", 1], ["pipe", 1, "act"], ["tc", 1], ["chrome", 1], ["files", 2], ["skype", 2], ["note", 2], ["excel", 2], ["ie", 2], ["team", 1], ["green", 1, "hot"]];
const TaskIcons = ({ cell, size, pt, u }) => TASKS.map(([k, n, st]) => (
  <TaskCell key={k} $w={cell} $pt={pt} $bg={st === "act" ? "#5a5e5e" : st === "hot" ? "#ae6931" : ""}>
    <Svg s={size} box={32}>{K[k]}</Svg>
    {n && <Under $w={st ? cell : u} $split={n === 2} $c={st === "hot" ? "#ff7300" : "#76b9ed"} />}
  </TaskCell>
));

/* ---------- explorer ---------- */
const TREE = [
  [0, "star", "Quick access"], [1, "desk", "Desktop", 1], [1, "down", "Downloads", 1], [1, "doc", "Documents", 1], [1, "pic", "Pictures", 1],
  [1, "", "Export"], [1, "", "Export"], [1, "", "Models"], [1, "", "Models"], [0, "cloud", "OneDrive"], [0, "pc", "This PC"], [1, "cube", "3D Objects"],
  [1, "desk", "Desktop"], [1, "doc", "Documents"], [1, "down", "Downloads"], [1, "music", "Music"], [1, "pic", "Pictures"], [1, "video", "Videos"],
  [1, "c", "Windows (C:)"], [1, "d", "Data (D:)"], [0, "net", "Network"],
];
const ViewIcons = () => (
  <ViewBtns>
    <ViewOn><Svg s={16}><L d="M0.500 2H4V14H0.500ZM0.500 6H4M0.500 10H4" c="#888" w={1} /><L d="M6 4H10M12 4H16M6 8H10M12 8H16M6 12H10M12 12H16" c="#666" w={1.200} /></Svg></ViewOn>
    <Svg s={14}>{T.pic}</Svg>
  </ViewBtns>
);
const Explorer = ({ w, h, titleH, titleX, crumbs, files, selected, scroll, max, status }) => (
  <Exp $w={w} $h={h}>
    <ETitle $h={titleH} $x={titleX}>
      <FolderMini /><Divider $h={12} $c="#777" $m="0 10px 0 8px" />
      <Svg w={14} h={15}><rect x="1" y="1" width="14" height="14.500" fill="#f6f6f6" stroke="#888" /><L d="M4 8L7 11L12 4" c="#e8672a" w={2.200} /></Svg>
      <CaretCell $m="0 0 0 9px"><FolderMini /></CaretCell><CaretCell $m="2px 9px 0 9px" $line><Caret $c="#222" /></CaretCell>
      <Divider $h={12} $c="#999" $m="0 8px 0 0" />Discrepencies9_26_2019
      <ECtl>
        <WinBtn $w={45} $h={22}><Svg s={10}><L d="M0 8H16" c="#888" w={1.600} /></Svg></WinBtn>
        <WinBtn $w={45} $h={22}><Svg s={10}>{max ? <L d="M1 4H12V15H1ZM4 4V1H15V12H12" c="#888" w={1.600} /> : <L d="M1 1H15V15H1Z" c="#888" w={1.600} />}</Svg></WinBtn>
        <WinBtn $w={45} $h={22}><XMark s={10} /></WinBtn>
      </ECtl>
    </ETitle>
    <ETabs>
      <EFile>File</EFile><ETab $w={59}>Home</ETab><ETab $w={58}>Share</ETab><ETab $w={60}>View</ETab>
      <Push /><Chevron dir="d" s={8} c="#888" w={1.200} /><NavIcon $w={11} />
      <Svg s={14}><circle cx="8" cy="8" r="8" fill="#0a78d0" /><text x="5.200" y="12.500" fontSize="12" fontWeight="700" fill="#fff">?</text></Svg>
    </ETabs>
    <ENav>
      <NavIcon $w={16}><Svg s={13}><L d="M15 8H2M8 2L2 8L8 14" c="#555" w={2} /></Svg></NavIcon>
      <NavIcon $w={43}><Svg s={13}><L d="M1 8H14M8 2L14 8L8 14" c="#ccc" w={2} /></Svg></NavIcon>
      <NavIcon $w={5}><Chevron dir="d" s={6} w={1.300} /></NavIcon>
      <NavIcon $w={35} $mr={-5}><Svg s={13}><L d="M8 15V2M2 8L8 2L14 8" c="#555" w={2} /></Svg></NavIcon>
      <Address>
        <FolderMini /><Chev $w={23}><Chevron /></Chev>
        {crumbs.map(([t, cw], i) => <React.Fragment key={i}><Crumb $w={cw}>{t}</Crumb>{i < crumbs.length - 1 && <Chev><Chevron /></Chev>}</React.Fragment>)}
        <Push /><Chevron dir="d" s={8} w={1.800} /><Divider $h={21} $c="#d9d9d9" $m="0 4px 0 3px" />
        <Svg s={11}><path d="M11 3A6 6 0 1 1 5 3" fill="none" stroke="#666" strokeWidth="1.900" /><L d="M8 0V5H13" c="#666" w={1.800} /></Svg><NavIcon $w={1} />
      </Address>
      <ESearch>Search Discrepencies9_26_2019<Svg s={12}><circle cx="10" cy="6" r="4.500" fill="none" stroke="#666" strokeWidth="1.800" /><L d="M7 9L1 15" c="#666" w={2.200} /></Svg></ESearch>
    </ENav>
    <EMain>
      <Tree $w={scroll ? 290 : 308}>
        {TREE.map(([lvl, ic, t, pin], i) => (
          <TreeRow key={i} $lvl={lvl} $gap={i > 0 && !lvl} $sel={t === selected}>
            {ic ? <Svg s={16}>{T[ic]}</Svg> : <><FolderMini /><NavIcon $w={3} /></>}<TreeText>{t}</TreeText>{pin && <PinCell $m={scroll ? 3 : 5}><Pin /></PinCell>}
          </TreeRow>
        ))}
      </Tree>
      {scroll && <EScroll><Chevron dir="u" s={9} w={1.800} /><EThumb /><Chevron dir="d" s={9} w={1.800} /></EScroll>}
      <List $ml={scroll ? 2 : 0}>
        <Head><HeadCell $w={326} $pl={4}>Name<Sort><Chevron dir="u" s={8} w={1} /></Sort></HeadCell><HeadCell $w={150}>Date modified</HeadCell><HeadCell $w={150}>Type</HeadCell><HeadCell $w={100}>Size</HeadCell></Head>
        <Rows>{files.map(([n, d], i) => <Row key={n} $sel={scroll && i === 0}><FolderMini /><RowName $w={314}>{n}</RowName><Dim>{d}</Dim><Dim>File folder</Dim></Row>)}</Rows>
      </List>
    </EMain>
    <EStatus>{status}<ViewIcons /></EStatus>
  </Exp>
);

const OPTIONS = ["Displacement ......", "Support ...........", "Restraint .........", "Forces _Moments ..", "Code Compliance ...", "General stress ....", "Geometry ..........", "Bend Angular Dist ."];

export default function App() {
  return (
    <>
      <Global />
      <Desktop>
        <Screen>
          <AppTitle>
            <Orb><Svg s={24} box={32}><PlantLogo /></Svg></Orb>
            <QuickBar>
              <Svg s={16} box={32}>{B.new}</Svg><Svg s={16} box={32}>{B.folder}</Svg><CaretCell $m="10px -8px 0 0"><Caret /></CaretCell><Svg s={16} box={32}>{B.recent}</Svg><Svg s={16} box={32}>{B.save}</Svg><Svg s={16} box={32}>{B.close}</Svg>
            </QuickBar>
            <CaretCell $m="10px 0 0 8px" $line><Caret $c="#15428b" /></CaretCell>
            <WinButtons>
              <WinBtn><Svg s={12}><L d="M0 8H16" c="#888" w={1.300} /></Svg></WinBtn>
              <WinBtn><Svg s={12}><L d="M1 4H12V15H1ZM4 4V1H15V12H12" c="#888" w={1.300} /></Svg></WinBtn>
              <WinBtn $red><XMark c="#fff" /></WinBtn>
              <Divider $h={28} $c="#fff" $m="0 1px 0 0" />
            </WinButtons>
          </AppTitle>
          <Tabs>{TABS.map(([t, w], i) => <Tab key={t} $w={w} $on={i === 0}>{t}</Tab>)}</Tabs>
          <RibbonBack>
            <Ribbon>
              {GROUPS.map(([name, w, pl, tools]) => (
                <Group key={name} $w={w}>
                  <GroupBody $pl={pl}>
                    {tools.map(([ic, tw, a, b]) => (
                      <Tool key={a + b} $w={tw}>
                        <Svg s={32} box={32}>{B[ic]}</Svg>
                        <ToolText><ToolLine>{a}</ToolLine>{b && <ToolLine>{b.replace("^", "").trim()}{b.includes("^") && <Caret $s={2.5} />}</ToolLine>}</ToolText>
                      </Tool>
                    ))}
                  </GroupBody>
                  <GroupName>{name}</GroupName>
                </Group>
              ))}
            </Ribbon>
          </RibbonBack>
          <ToolArea><ToolStrip items={STRIP1} end={3} /><ToolStrip items={STRIP2} end={3} /><ToolStrip items={STRIP3} end={3} /></ToolArea>
          <Work>
            <View><Model /></View>
            <VBar><Chevron dir="u" s={10} w={2} /><VThumb $m="268px 0 440px" /><Chevron dir="d" s={10} w={2} /></VBar>
          </Work>
          <HBar><Chevron dir="l" s={10} w={2} /><HThumb /><Chevron dir="r" s={10} w={2} /></HBar>
          <Status><StatusDark><StatusCell $w={73}>A03 N</StatusCell><StatusCell $w={49}>A</StatusCell><StatusCell $w={121}>6STD</StatusCell><StatusCell $w={90}>None</StatusCell></StatusDark></Status>
          <Taskbar $h={50} $bg="linear-gradient(90deg,#1d2827 0 60px,#383838 490px,#3a3a3a 1650px,#1f2a29 1860px)">
            <TaskCell $w={60} $pt={15}><Svg s={21} box={32}>{K.start}</Svg></TaskCell>
            <SearchBox>
              <Svg s={28} box={32}><circle cx="16" cy="16" r="13" fill="none" stroke="#111" strokeWidth="3.500" /></Svg>
              <SearchText>Type here to search</SearchText>
              <Svg s={20}><rect x="5" y="0.500" width="6" height="10" rx="2" fill="none" stroke="#333" strokeWidth="1.200" /><L d="M2.500 8Q3 13 8 13T13.500 8M8 13V16M5 15.500H11" c="#333" w={1.200} /></Svg>
            </SearchBox>
            <TaskCell $w={63} $pt={14}><Svg s={22} box={32}>{K.view}</Svg></TaskCell>
            <TaskIcons cell={62} size={29} pt={10} u={50} />
            <Tray>
              <TrayCell $w={44}><Svg s={18}><circle cx="5" cy="8" r="2.500" fill="none" stroke="#eee" strokeWidth="1.200" /><circle cx="11" cy="3.500" r="2.500" fill="none" stroke="#eee" strokeWidth="1.200" /><L d="M1 15Q1 11 5 11T9 15M8 8Q14 5 15 11" c="#eee" w={1.200} /></Svg></TrayCell>
              <TrayCell $w={38}><Chevron dir="u" s={15} c="#eee" w={1.500} /></TrayCell>
              <TrayCell $w={30}><Svg s={20}><rect x="4" y="4.500" width="11" height="8" fill="none" stroke="#eee" strokeWidth="1.200" /><rect x="6" y="6.500" width="7" height="4" fill="#eee" /><L d="M0 3H4M2 3V8" c="#eee" w={1.500} /></Svg></TrayCell>
              <TrayCell $w={30}><Svg s={18}><path d="M1 11Q3 3 14 1M4.500 12.500Q6 6.500 14 5M8 13.500Q9 9.500 14 8.500M11 14Q12 12.500 14 12" fill="none" stroke="#ddd" strokeWidth="1.300" /></Svg></TrayCell>
              <TrayCell $w={28}><Svg s={19}><L d="M1 5.500H4L8 2V14L4 10.500H1Z" c="#eee" w={1.200} /><L d="M10.500 5.500Q12 8 10.500 10.500M13 3.500Q15.500 8 13 12.500" c="#ccc" w={1.200} /></Svg></TrayCell>
              <Clock $w={87} $f={15.500} $lh={24} $ls={-0.9}>3:50 PM<br />9/26/2019</Clock>
              <TrayCell $w={58}><Svg s={30}><F d="M1 1H13V11H6L3 14V11H1Z" c="#fff" /><L d="M3 3.500H11M3 6H11M3 8.500H8" c="#222" w={1} /><circle cx="11.500" cy="11.500" r="4.300" fill="#3a4444" stroke="#aaa" strokeWidth=".6" /><text x="9.700" y="14" fontSize="7" fill="#fff">1</text></Svg></TrayCell>
              <Divider $h={50} $c="#5a6262" $m="0 5px 0 0" />
            </Tray>
          </Taskbar>

          <Float $x={1791} $y={33} $w={16} $h={16}><Binoc s={16} /></Float>
          <Float $x={1912} $y={39} $w={6} $h={6}><Caret $s={2.5} /></Float>
          <Recorder $x={1808} $y={24} $w={103} $h={40}>
            <Svg s={32} box={32}><CheckGear /></Svg><Divider $h={34} $m="0 0 0 4px" /><Block $w={7} $m={9} /><Block $w={7} $m={2} /><Block $w={16} $m={10} />
          </Recorder>
          <Tip $x={1721} $y={68} $w={190} $h={55}>
            <TipLine $r={3} $ls={-0.15}>Waiting for the dlgNote object.</TipLine><Progress /><TipLine $r={3} $ls={-0.1}>ImportExport-PXF_DTP</TipLine>
          </Tip>
          <Dialog $x={943} $y={174} $w={577} $h={85} $b="#9aa7b8">
            <DlgTitle $c="#999" $pr={14} $ls={-0.7}><Binoc s={19} /><NavIcon $w={5} />Command Search Utility<Push /><XMark s={13} /></DlgTitle>
            <SearchRow>Search:<Combo><ComboBtn><Caret $s={4} $c="#000" /></ComboBtn></Combo></SearchRow>
          </Dialog>
          <Dialog $x={866} $y={365} $w={200} $h={272} $b="#777">
            <DlgTitle $c="#111" $pr={24} $ls={-0.8}>PXF Batc...<NavIcon $w={70}>?</NavIcon><Push /><XMark s={13} c="#111" /></DlgTitle>
            <FileLine><FileKey>File name :</FileKey>QA325A.PXF</FileLine>
            {OPTIONS.map(o => {
              const on = o.startsWith("Geo");
              return <Opt key={o} $on={on}><OptText $on={on}>{o}</OptText><Check $on={on}>{on && <Svg s={10}><L d="M2 7L6 12L14 3" c="#000" w={3.500} /></Svg>}</Check></Opt>;
            })}
            <BtnRow><Btn $def>OK</Btn><Btn>Cancel</Btn><Btn>Help</Btn></BtnRow>
          </Dialog>
          <Float $x={1020} $y={530} $w={16} $h={24}><svg width="16" height="24" viewBox="0 0 16 24"><path d="M0.500 0.500V20L5 16L8 22.500L11 21L8 15H14.500Z" fill="#fff" stroke="#222" /></svg></Float>
        </Screen>

        <Screen>
          <Explorer w={1920} h={1040} titleH={23} titleX={0} max selected="Network"
            crumbs={[["Network", 44], ["isbprdfs03", 53], ["QA", 16], ["TestingProjects", 79], ["AlphaTesting", 68], ["CAE", 21], ["AutoPIPE", 48], ["AutoPIPERegression", 105], ["UIAutomation", 74], ["Discrepancies", 71], ["Discrepencies9_26_2019", 130]]}
            files={[["DistributedLoad_DTP", "9/26/2019 3:00 PM"]]}
            status={<>1 item<Divider $h={18} $c="#e5e5e5" $m="0 10px 0 10px" />State:<NavIcon $w={20}><Svg s={15}><circle cx="8" cy="8" r="7.500" fill="#5cbf2a" /><circle cx="8" cy="8" r="3.800" fill="none" stroke="#f3e65a" strokeWidth="2" strokeDasharray="9 3" /></Svg></NavIcon>Online<Divider $h={18} $c="#e5e5e5" $m="0 0 0 8px" /></>} />
          <Taskbar $h={40} $bg="#1f2928">
            <TaskCell $w={48} $pt={12}><Svg s={17} box={32}>{K.start}</Svg></TaskCell>
            <TaskCell $w={48} $pt={10}><Svg s={20} box={32}>{K.ring}</Svg></TaskCell>
            <TaskCell $w={50} $pt={11}><Svg s={18} box={32}>{K.view}</Svg></TaskCell>
            <TaskIcons cell={49.1} size={23} pt={9} u={40} />
            <Tray><Clock $w={64} $f={11.500} $lh={18} $ls={-0.4}>3:50 PM<br />9/26/2019</Clock></Tray>
          </Taskbar>
          <ExpFloat>
            <Explorer w={1511} h={651} titleH={30} titleX={9} scroll selected="Windows (C:)"
              crumbs={[["This PC", 39], ["Windows (C:)", 70], ["Users", 27], ["Tayyabaa.Mehreen", 98], ["AppData", 45], ["Local", 27], ["Temp", 29], ["Discrepencies9_26_2019", 130]]}
              files={[["DistributedLoad_DTP", "9/26/2019 3:00 PM"], ["ExportDXF", "9/26/2019 3:14 PM"], ["ImportExportPXF", "9/26/2019 3:32 PM"], ["SaveAsNTL", "9/26/2019 3:21 PM"]]}
              status={<>4 items<Divider $h={12} $c="#e5e5e5" $m="0 10px 0 10px" />1 item selected<Divider $h={12} $c="#e5e5e5" $m="0 0 0 10px" /></>} />
          </ExpFloat>
        </Screen>
      </Desktop>
    </>
  );
}
